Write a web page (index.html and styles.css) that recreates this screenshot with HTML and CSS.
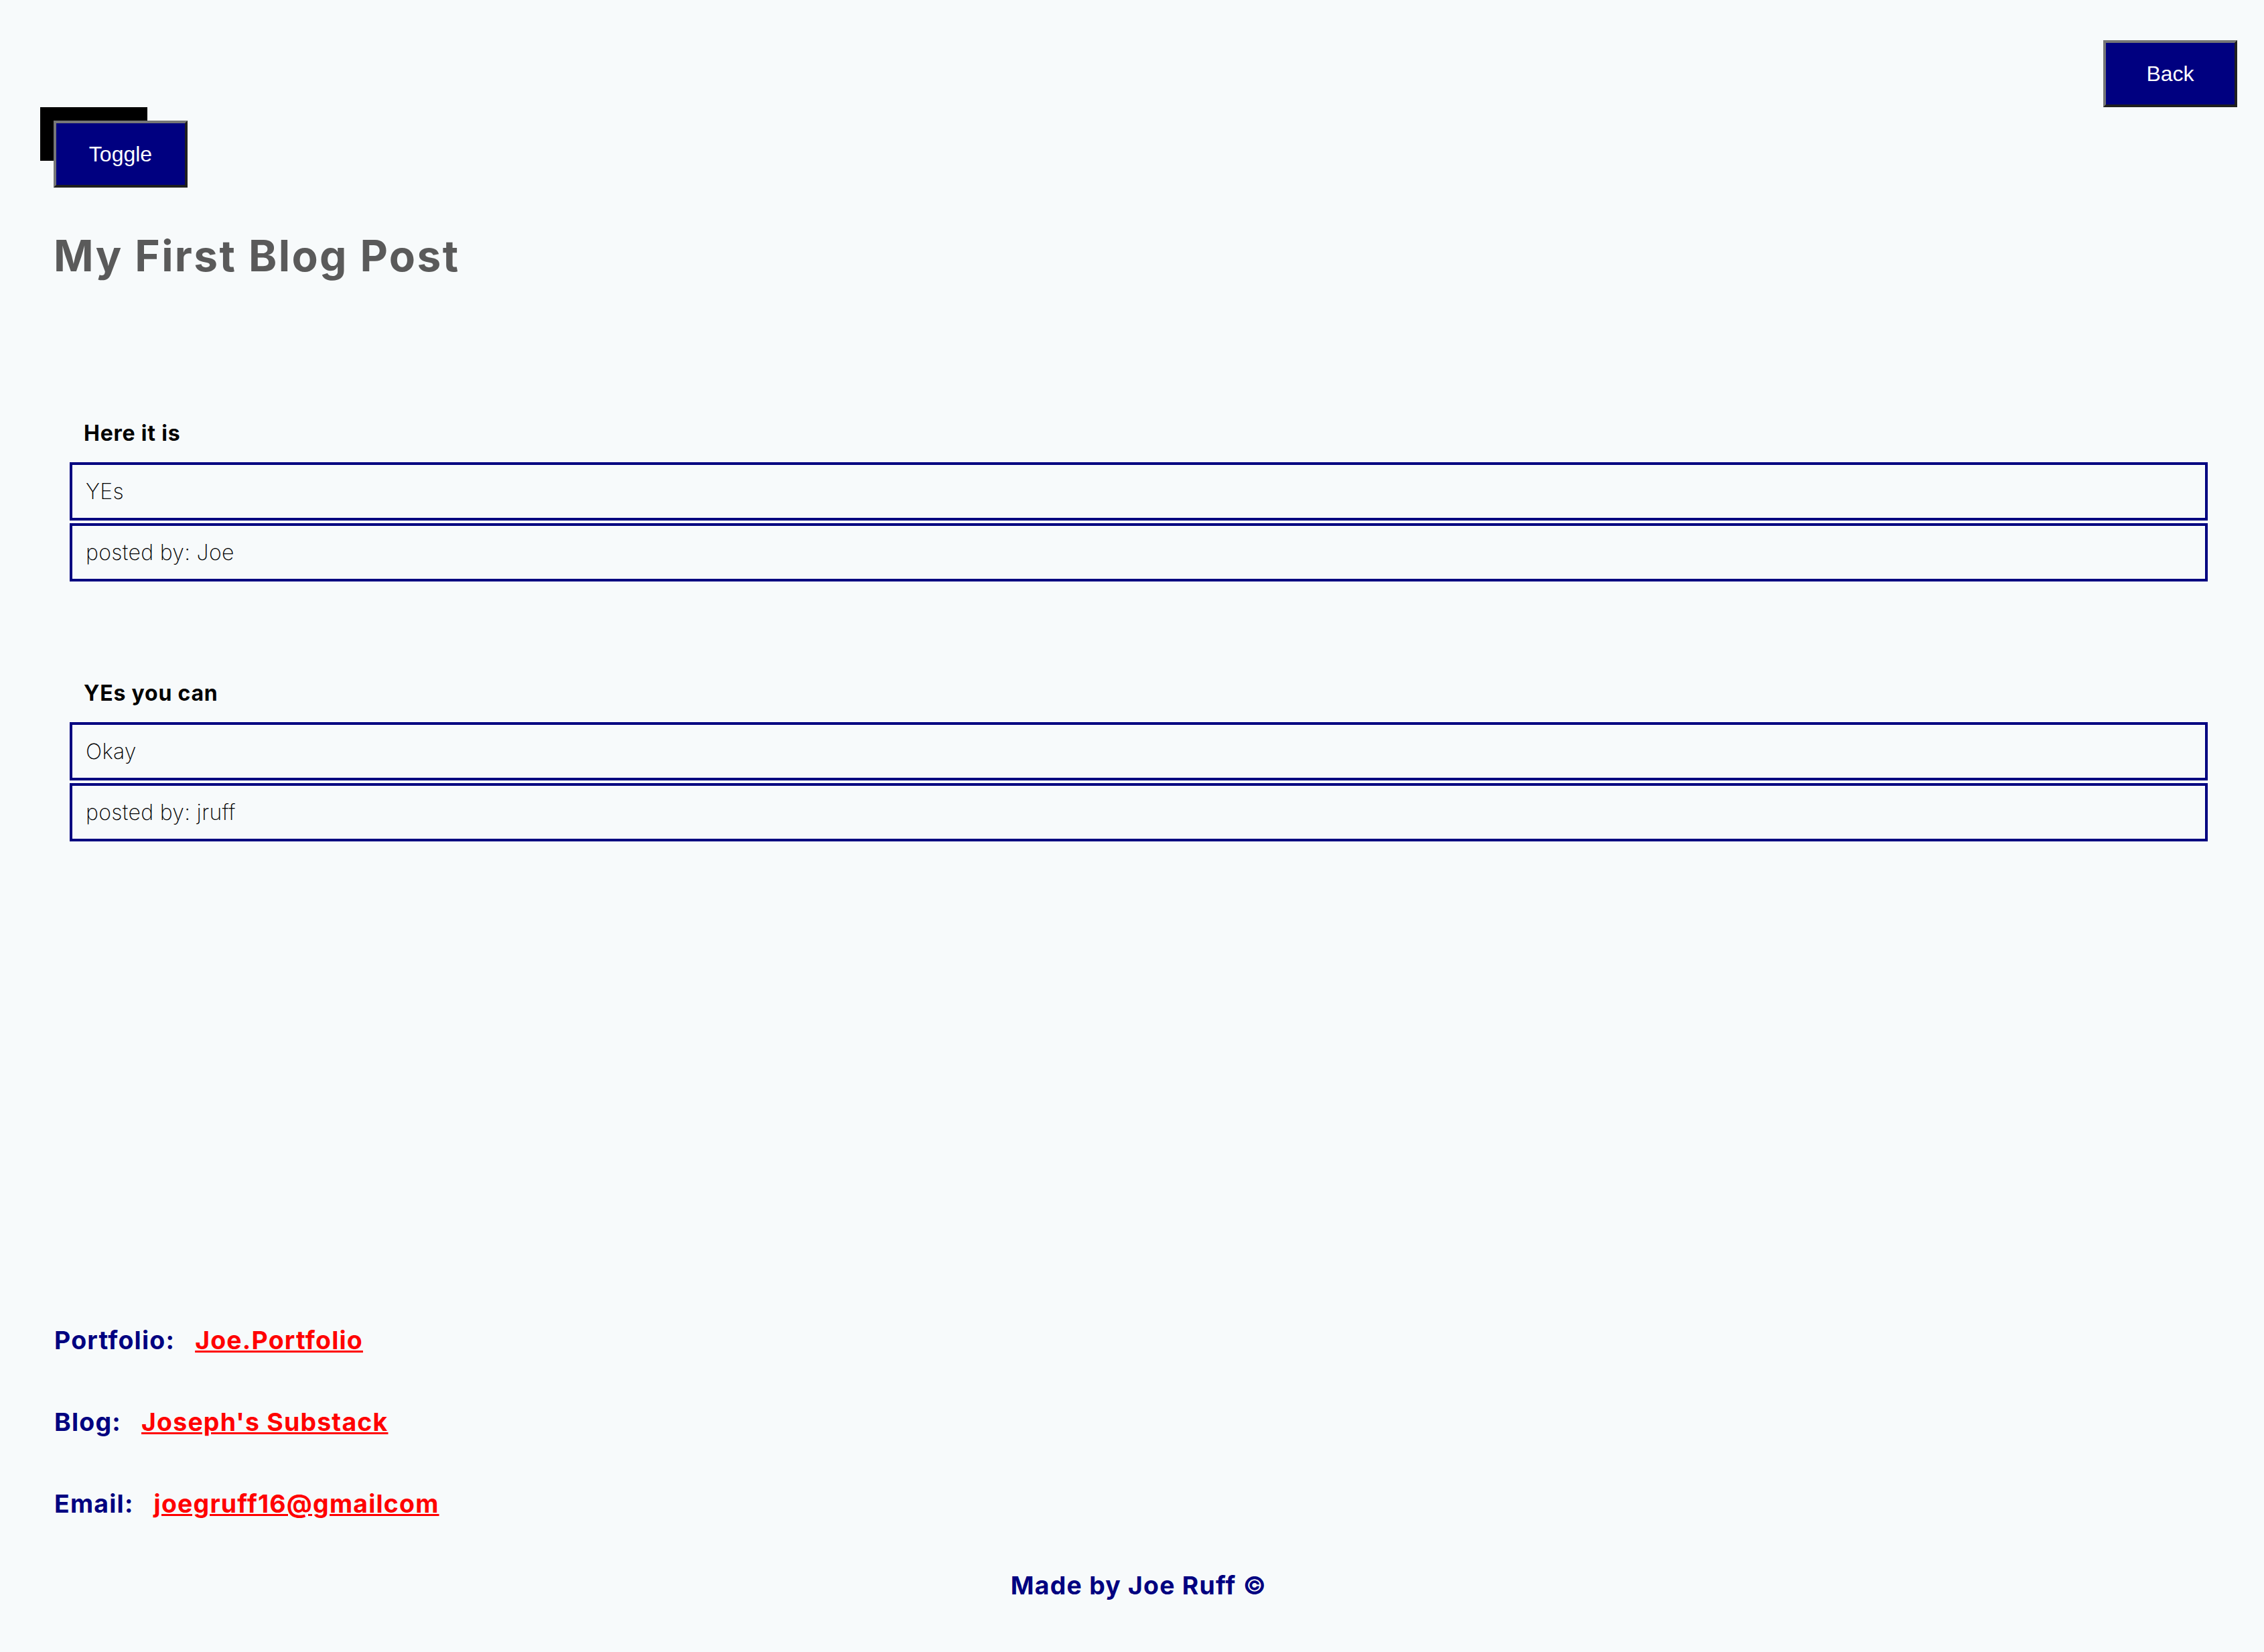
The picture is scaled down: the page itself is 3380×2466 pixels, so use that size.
FILE: index.html
```html
<!DOCTYPE html>
<html lang="en">
<head>
<meta charset="utf-8">
<title>My First Blog Post</title>
<link rel="stylesheet" href="styles.css">
</head>
<body>
<div class="page">
  <header class="topbar">
    <button class="btn back-btn">Back</button>
  </header>
  <div class="nav-area">
    <div class="nav-box"></div>
    <button class="btn toggle-btn">Toggle</button>
  </div>
  <h1 class="title">My First Blog Post</h1>
  <section class="posts">
    <article class="post">
      <h4 class="post-title">Here it is</h4>
      <div class="post-box">YEs</div>
      <div class="post-box">posted by: Joe</div>
    </article>
    <article class="post">
      <h4 class="post-title">YEs you can</h4>
      <div class="post-box">Okay</div>
      <div class="post-box">posted by: jruff</div>
    </article>
  </section>
  <footer class="footer">
    <div class="footer-row"><span class="footer-label">Portfolio:</span><a class="footer-link" href="#">Joe.Portfolio</a></div>
    <div class="footer-row"><span class="footer-label">Blog:</span><a class="footer-link" href="#">Joseph's Substack</a></div>
    <div class="footer-row"><span class="footer-label">Email:</span><a class="footer-link" href="#">joegruff16@gmailcom</a></div>
    <div class="credit">Made by Joe Ruff ©</div>
  </footer>
</div>
</body>
</html>
```

FILE: styles.css
```css
html, body {
  margin: 0;
  padding: 0;
  background: #f7fafb;
}
body {
  font-family: Inter, "Noto Sans", sans-serif;
  font-size: 32px;
  color: #000;
}
.page {
  display: flex;
  flex-direction: column;
  min-height: 2466px;
  box-sizing: border-box;
}
.topbar {
  display: flex;
  justify-content: flex-end;
  padding: 60px 40px 0 0;
}
.btn {
  font-family: "Liberation Sans", Arial, sans-serif;
  font-size: 32px;
  color: #ffffff;
  background: #000080;
  width: 200px;
  height: 100px;
  box-sizing: border-box;
  border-width: 4px;
  border-style: solid;
  border-color: #767676 #1f1f1f #1f1f1f #767676;
  padding: 0;
  margin: 0;
}
.nav-area {
  position: relative;
  margin-left: 60px;
  width: 160px;
  height: 80px;
}
.nav-box {
  width: 160px;
  height: 80px;
  background: #000;
}
.toggle-btn {
  position: absolute;
  left: 20px;
  top: 20px;
}
.title {
  margin: 103px 0 0 80px;
  font-size: 64px;
  line-height: 78px;
  font-weight: 700;
  letter-spacing: 2.4px;
  color: #5a5a5a;
}
.posts {
  display: flex;
  flex-direction: column;
  gap: 147px;
  margin: 206px 84px 0 104px;
}
.post {
  display: flex;
  flex-direction: column;
  gap: 4px;
}
.post-title {
  margin: 0 0 20px 0;
  padding-left: 21px;
  font-size: 32px;
  line-height: 39px;
  font-weight: 700;
  letter-spacing: 0.8px;
}
.post-box {
  border: 4px solid #000080;
  padding: 20px 20px;
  font-size: 32px;
  line-height: 39px;
  font-weight: 200;
  letter-spacing: 0.3px;
  color: #000;
}
.footer {
  display: flex;
  flex-direction: column;
  gap: 76px;
  margin-top: 722px;
}
.footer-row {
  display: flex;
  gap: 30px;
  padding-left: 81px;
  font-size: 37.44px;
  line-height: 46px;
  font-weight: 700;
  letter-spacing: 1.2px;
}
.footer-label {
  color: #000080;
}
.footer-link {
  color: #ff0000;
  text-decoration: underline;
}
.credit {
  text-align: center;
  padding-left: 20px;
  font-size: 37.44px;
  line-height: 46px;
  font-weight: 700;
  letter-spacing: 1.2px;
  color: #000080;
}
```
